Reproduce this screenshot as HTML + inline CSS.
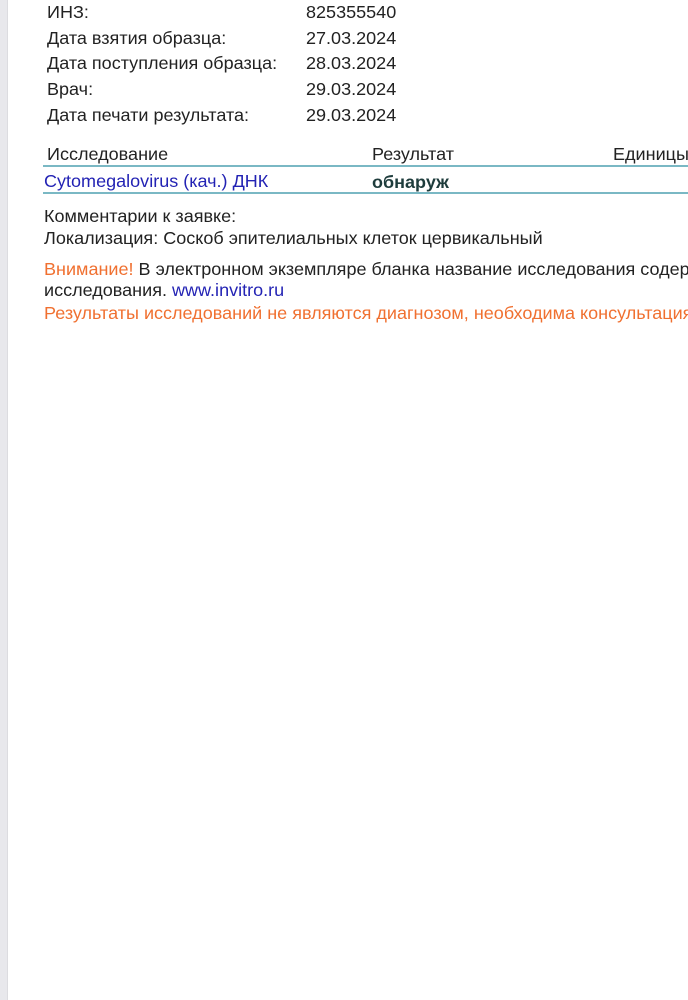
<!DOCTYPE html>
<html><head><meta charset="utf-8"><style>
body{margin:0;width:688px;height:1000px;background:#fff;overflow:hidden;position:relative;font-family:"Liberation Sans",sans-serif;color:#222;font-size:17.5px}
.strip{position:absolute;left:0;top:0;width:7px;height:1000px;background:#e8e8ec;border-right:1px solid #dcdce0}
.t{position:absolute;white-space:nowrap;line-height:20px;transform:scaleX(1.03);transform-origin:left center}
.line{position:absolute;left:43px;right:0;height:2px;background:#7ab8c4}
.blue{color:#2323b4}.or{color:#f07030}
</style></head><body>
<div class="strip"></div>
<div class="t" style="left:47px;top:2px">ИНЗ:</div><div class="t" style="left:306px;top:2px">825355540</div>
<div class="t" style="left:47px;top:28px">Дата взятия образца:</div><div class="t" style="left:306px;top:28px">27.03.2024</div>
<div class="t" style="left:47px;top:53px">Дата поступления образца:</div><div class="t" style="left:306px;top:53px">28.03.2024</div>
<div class="t" style="left:47px;top:79px">Врач:</div><div class="t" style="left:306px;top:79px">29.03.2024</div>
<div class="t" style="left:47px;top:105px">Дата печати результата:</div><div class="t" style="left:306px;top:105px">29.03.2024</div>
<div class="t" style="left:47px;top:144px">Исследование</div><div class="t" style="left:372px;top:144px">Результат</div><div class="t" style="left:613px;top:144px">Единицы</div>
<div class="line" style="top:165px"></div>
<div class="t blue" style="left:44px;top:171px">Cytomegalovirus (кач.) ДНК</div>
<div class="t" style="left:372px;top:172px;font-weight:bold;color:#1e3c3c">обнаруж</div>
<div class="line" style="top:192px"></div>
<div class="t" style="left:44px;top:206px">Комментарии к заявке:</div>
<div class="t" style="left:44px;top:228px">Локализация: Соскоб эпителиальных клеток цервикальный</div>
<div class="t" style="left:44px;top:259px"><span class="or">Внимание!</span> В электронном экземпляре бланка название исследования содержится</div>
<div class="t" style="left:44px;top:280px">исследования. <span class="blue">www.invitro.ru</span></div>
<div class="t or" style="left:44px;top:303px">Результаты исследований не являются диагнозом, необходима консультация</div>
</body></html>
